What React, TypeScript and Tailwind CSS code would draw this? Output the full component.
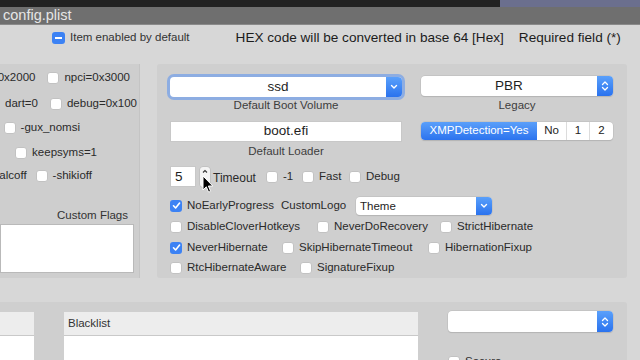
import { ReactNode } from "react";

function Check({ on = false }: { on?: boolean }) {
  if (on)
    return (
      <span className="w-[12px] h-[12px] rounded-[3px] bg-[#3c82f4] flex items-center justify-center flex-shrink-0">
        <svg width="9" height="9" viewBox="0 0 9 9">
          <path d="M1.5 4.8 L3.6 7 L7.6 2" stroke="white" strokeWidth="1.6" fill="none" strokeLinecap="round" strokeLinejoin="round" />
        </svg>
      </span>
    );
  return <span className="w-[12px] h-[12px] rounded-[3px] bg-white border border-[#c2c2c2] flex-shrink-0" />;
}

function Opt({ on, label, w }: { on?: boolean; label: string; w?: string }) {
  return (
    <div className={`flex items-center gap-[5px] flex-shrink-0 ${w ?? ""}`}>
      <Check on={on} />
      <span className="whitespace-nowrap">{label}</span>
    </div>
  );
}

function Chevron() {
  return (
    <svg width="8" height="6" viewBox="0 0 8 6">
      <path d="M1.5 1.5 L4 4 L6.5 1.5" stroke="white" strokeWidth="1.4" fill="none" strokeLinecap="round" strokeLinejoin="round" />
    </svg>
  );
}

function UpDown() {
  return (
    <svg width="8" height="12" viewBox="0 0 8 12">
      <path d="M1.5 4.5 L4 2 L6.5 4.5 M1.5 7.5 L4 10 L6.5 7.5" stroke="white" strokeWidth="1.3" fill="none" strokeLinecap="round" strokeLinejoin="round" />
    </svg>
  );
}

function Popup({ children, arrow, className }: { children?: ReactNode; arrow: ReactNode; className: string }) {
  return (
    <div className={`flex bg-white rounded-[4px] shadow-[0_0_0_0.5px_#b9b9b9,0_1px_1px_rgba(0,0,0,0.15)] overflow-hidden ${className}`}>
      <div className="flex-1 flex items-center justify-center text-[13.5px] text-[#1e1e1e]">{children}</div>
      <div className="w-[16px] bg-gradient-to-b from-[#5aa0fb] to-[#2a72ee] flex items-center justify-center">{arrow}</div>
    </div>
  );
}

export default function App() {
  return (
    <div className="w-[640px] h-[360px] overflow-hidden relative bg-[#d7d7d7] text-[11.5px] text-[#2a2a2a] font-['Liberation_Sans',Arial,sans-serif]">
      {/* window chrome */}
      <div className="flex h-[7px]">
        <div className="flex-1 bg-[#222]" />
        <div className="w-[140px] bg-[#6b6f8e]" />
      </div>
      <div className="h-[18px] bg-[#6f6f6f] border-b border-[#8a8a8a] pl-[3px] text-[14.5px] leading-[17px] text-[#e6e6e6]">config.plist</div>

      {/* header line */}
      <div className="h-[26px] flex items-center">
        <div className="ml-[52px] w-[13px] h-[12px] rounded-[3px] bg-[#3c82f4] flex items-center justify-center">
          <span className="w-[7px] h-[1.5px] bg-white" />
        </div>
        <span className="ml-[5px] text-[#333]">Item enabled by default</span>
        <span className="ml-[46px] text-[13.6px] text-[#1c1c1c] whitespace-nowrap">HEX code will be converted in base 64 [Hex]</span>
        <span className="ml-[15px] text-[13.6px] text-[#1c1c1c] whitespace-nowrap">Required field (*)</span>
      </div>

      <div className="mt-[13px] flex h-[214px]">
        {/* boot args panel */}
        <div className="w-[140px] flex-shrink-0 bg-[#cecece] border-r border-[#c4c4c4] pt-[2px] flex flex-col">
          <div className="h-[24px] w-[130px] flex items-center justify-end gap-[12px]">
            <Opt label="npci=0x2000" />
            <Opt label="npci=0x3000" />
          </div>
          <div className="h-[28px] w-[137px] flex items-center justify-end gap-[12px]">
            <Opt label="-disablegfxfirmware" />
            <Opt label="dart=0" />
            <Opt label="debug=0x100" />
          </div>
          <div className="h-[20px] w-[80px] flex items-center justify-end">
            <Opt label="-gux_nomsi" />
          </div>
          <div className="h-[30px] w-[97px] flex items-center justify-end">
            <Opt label="keepsyms=1" />
          </div>
          <div className="h-[16px] w-[92px] flex items-center justify-end gap-[9px]">
            <Opt label="-alcoff" />
            <Opt label="-shikioff" />
          </div>
          <div className="mt-[24px] h-[14px] pr-[11px] text-right leading-[14px] text-[#333]">Custom Flags</div>
          <div className="mt-[2px] mr-[5px] h-[49px] bg-white border border-[#b9b9b9]" />
        </div>

        {/* main panel */}
        <div className="ml-[17px] w-[470px] flex-shrink-0 bg-[#cfcfcf] rounded-[3px] pl-[13px] pt-[13px] relative">
          <div className="flex">
            <div className="w-[232px] flex flex-col">
              <Popup arrow={<Chevron />} className="h-[20px] shadow-[0_0_0_3px_rgba(96,150,238,0.6)]">ssd</Popup>
              <div className="h-[17px] leading-[17px] text-center text-[#3d3d3d]">Default Boot Volume</div>
              <div className="mt-[7px] h-[21px] bg-white border border-[#c8c8c8] flex items-center justify-center text-[13.5px] text-[#1e1e1e]">boot.efi</div>
              <div className="h-[18px] leading-[18px] text-center text-[#3d3d3d]">Default Loader</div>
              <div className="mt-[6px] h-[21px] flex items-center">
                <div className="w-[26px] h-[21px] flex-shrink-0 bg-white border border-[#c8c8c8] pl-[4px] text-[13.5px] leading-[19px] text-[#1e1e1e]">5</div>
                <div className="ml-[4px] w-[10px] h-[20px] flex-shrink-0 bg-[#f4f4f4] rounded-[3px] shadow-[0_0_0_0.5px_#b5b5b5] flex flex-col items-center pt-[2px]">
                  <svg width="6" height="5" viewBox="0 0 6 5"><path d="M1 3.5 L3 1.5 L5 3.5" stroke="#333" strokeWidth="1.1" fill="none" /></svg>
                </div>
                <span className="ml-[3px] mt-[3px] w-[53px] flex-shrink-0 text-[12px]">Timeout</span>
                <Opt label="-1" w="w-[36px]" />
                <Opt label="Fast" w="w-[47px]" />
                <Opt label="Debug" />
              </div>
            </div>
            <div className="ml-[19px] w-[192px] flex flex-col">
              <Popup arrow={<UpDown />} className="h-[20px] -mt-[1px]">PBR</Popup>
              <div className="h-[19px] leading-[19px] text-center text-[#3d3d3d]">Legacy</div>
              <div className="mt-[7px] h-[18px] flex rounded-[4px] overflow-hidden bg-white shadow-[0_0_0_0.5px_#b9b9b9,0_1px_1px_rgba(0,0,0,0.15)] text-[#222]">
                <div className="w-[116px] bg-gradient-to-b from-[#5a9ffa] to-[#2c73ee] text-white font-medium flex items-center justify-center">XMPDetection=Yes</div>
                <div className="w-[30px] flex items-center justify-center border-r border-[#dcdcdc]">No</div>
                <div className="w-[23px] flex items-center justify-center border-r border-[#dcdcdc]">1</div>
                <div className="flex-1 flex items-center justify-center">2</div>
              </div>
            </div>
          </div>

          <div className="mt-[8px] h-[21px] flex items-center">
            <Opt on label="NoEarlyProgress" w="w-[111px]" />
            <span className="w-[75px] flex-shrink-0">CustomLogo</span>
            <div className="w-[136px] h-[18px] flex bg-white rounded-[4px] shadow-[0_0_0_0.5px_#b9b9b9,0_1px_1px_rgba(0,0,0,0.15)] overflow-hidden">
              <div className="flex-1 pl-[4px] leading-[18px] text-[#1e1e1e]">Theme</div>
              <div className="w-[16px] bg-gradient-to-b from-[#5aa0fb] to-[#2a72ee] flex items-center justify-center"><Chevron /></div>
            </div>
          </div>
          <div className="h-[21px] flex items-center">
            <Opt label="DisableCloverHotkeys" w="w-[147px]" />
            <Opt label="NeverDoRecovery" w="w-[123px]" />
            <Opt label="StrictHibernate" />
          </div>
          <div className="h-[21px] flex items-center">
            <Opt on label="NeverHibernate" w="w-[112px]" />
            <Opt label="SkipHibernateTimeout" w="w-[146px]" />
            <Opt label="HibernationFixup" />
          </div>
          <div className="h-[20px] flex items-center">
            <Opt label="RtcHibernateAware" w="w-[130px]" />
            <Opt label="SignatureFixup" />
          </div>

          {/* mouse pointer */}
          <svg className="absolute left-[45px] top-[111px]" width="12" height="19" viewBox="0 0 12 19">
            <path d="M1 1 L1 15 L4.3 11.8 L6.6 17.2 L8.6 16.3 L6.4 11 L10.8 11 Z" fill="black" stroke="white" strokeWidth="1" strokeLinejoin="round" />
          </svg>
        </div>
      </div>

      {/* lower panel */}
      <div className="mt-[24px] w-[627px] h-[80px] bg-[#cfcfcf] rounded-r-[3px] pt-[10px] flex">
        <div className="w-[34px] flex flex-col">
          <div className="h-[24px] bg-[#ededed] border-b border-[#c9c9c9]" />
          <div className="flex-1 bg-white" />
        </div>
        <div className="ml-[30px] w-[354px] flex flex-col">
          <div className="h-[24px] bg-[#ededed] border-b border-[#c9c9c9] pl-[4px] leading-[23px] text-[#333]">Blacklist</div>
          <div className="flex-1 bg-white" />
        </div>
        <div className="ml-[30px] w-[165px] flex flex-col">
          <Popup arrow={<UpDown />} className="h-[21px] -mt-[1px]" />
          <div className="mt-[21px] flex items-center gap-[5px]">
            <Check />
            <span>Secure</span>
          </div>
        </div>
      </div>
    </div>
  );
}
